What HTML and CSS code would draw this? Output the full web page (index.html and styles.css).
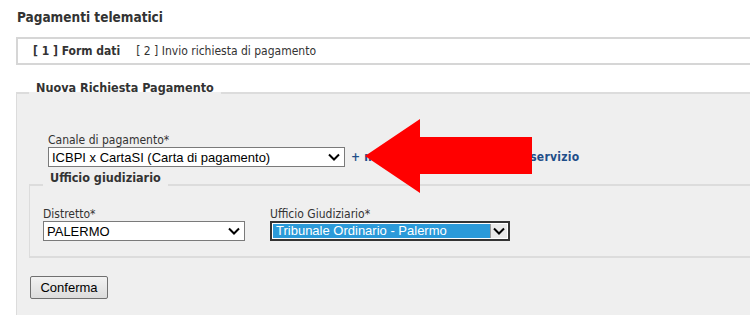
FILE: index.html
```html
<!DOCTYPE html>
<html lang="it">
  <head>
    <meta charset="UTF-8" />
    <meta name="viewport" content="width=device-width, initial-scale=1.0" />
    <title>Pagamenti telematici</title>
    <link rel="stylesheet" href="styles.css">
  </head>
  <body>
    <h1 class="page-title">Pagamenti telematici</h1>

    <div class="steps">
      <span class="step active">[ 1 ] Form dati</span>
      <span class="step">[ 2 ] Invio richiesta di pagamento</span>
    </div>

    <fieldset class="box">
      <legend>Nuova Richiesta Pagamento</legend>

      <div class="field canale">
        <label>Canale di pagamento*</label>
        <div class="field-line">
          <div class="select wide">
            <span class="value">ICBPI x CartaSI (Carta di pagamento)</span>
            <svg class="chevron" viewBox="0 0 12 8" width="12" height="8"><path d="M1 1.5 L6 6.5 L11 1.5" /></svg>
          </div>
          <a class="more" href="#">+ maggiori informazioni sul servizio</a>
        </div>
      </div>

      <fieldset class="box inner">
        <legend>Ufficio giudiziario</legend>
        <div class="field-row">
          <div class="field">
            <label>Distretto*</label>
            <div class="select distretto">
              <span class="value">PALERMO</span>
              <svg class="chevron" viewBox="0 0 12 8" width="12" height="8"><path d="M1 1.5 L6 6.5 L11 1.5" /></svg>
            </div>
          </div>
          <div class="field">
            <label>Ufficio Giudiziario*</label>
            <div class="select focused">
              <span class="value">Tribunale Ordinario - Palermo</span>
              <span class="drop">
                <svg class="chevron" viewBox="0 0 12 8" width="12" height="8"><path d="M1 1.5 L6 6.5 L11 1.5" /></svg>
              </span>
            </div>
          </div>
        </div>
      </fieldset>

      <button class="btn" type="button">Conferma</button>
    </fieldset>

    <!-- freccia rossa sopra il link -->
    <svg class="red-arrow" viewBox="0 0 168 74" width="168" height="74">
      <polygon points="0,37 55,0 55,18 167,18 167,55 55,55 55,74" />
    </svg>
  </body>
</html>
```

FILE: styles.css
```css
html,
body {
  margin: 0;
  padding: 0;
  overflow: hidden;
}

body {
  width: 800px;
  height: 315px;
  background: #fff;
  color: #333;
  font-family: "DejaVu Sans Condensed", "DejaVu Sans", sans-serif;
  font-size: 12px;
  position: relative;
}

.page-title {
  margin: 0;
  padding: 9px 0 0 17px;
  font-size: 13.5px;
  line-height: 17px;
  font-weight: bold;
  color: #333;
}

.steps {
  margin: 11px 0 0 16px;
  height: 24px;
  border: 2px solid #d6d6d6;
  display: flex;
  align-items: center;
  gap: 16px;
  padding-left: 15px;
}

.step.active {
  font-weight: bold;
}

.box {
  margin: 15px 0 0 16px;
  padding: 0 12px 20px 12px;
  border: 1px solid #dcdcdc;
  border-width: 2px 0 0 1px;
  background: #efefef;
}

.box legend {
  margin-left: 0;
  padding: 0 7px 10px;
  font-size: 12.5px;
  font-weight: bold;
  line-height: 16px;
}

.field label {
  display: block;
  line-height: 14px;
}

.canale {
  margin: 27px 0 0 19px;
}

.field-line {
  display: flex;
  align-items: center;
  gap: 6px;
}

.select {
  height: 20px;
  box-sizing: border-box;
  border: 1px solid #7a7a7a;
  background: #fff;
  display: flex;
  align-items: center;
  font-family: "Liberation Sans", Arial, sans-serif;
  font-size: 13px;
  color: #000;
}

.select .value {
  flex: 1;
  padding-left: 3px;
  white-space: nowrap;
}

.chevron {
  fill: none;
  stroke: #000;
  stroke-width: 2;
  margin-right: 4px;
}

.select.wide {
  width: 297px;
}

.select.distretto {
  width: 202px;
}

.more {
  color: #1f4e89;
  font-weight: bold;
  letter-spacing: 0.25px;
  text-decoration: none;
}

.box.inner {
  margin: 3px 0 0;
  padding: 7px 13px 15px;
  border-width: 2px 0 2px 1px;
}

.box.inner legend {
  padding-bottom: 14px;
}

.field-row {
  display: flex;
  gap: 25px;
}

.select.focused {
  width: 240px;
  border: 2px solid #333;
  padding: 1px;
}

.select.focused .value {
  background: #2b9ad9;
  color: #fff;
  height: 100%;
  line-height: 14px;
}

.select.focused .drop {
  width: 16px;
  height: 100%;
  display: flex;
  align-items: center;
  justify-content: center;
  background: #e8e8e8;
  border-left: 1px solid #999;
}

.select.focused .chevron {
  margin: 0;
}

.btn {
  margin-top: 18px;
  margin-left: 1px;
  width: 78px;
  height: 23px;
  border: 1px solid #707070;
  border-radius: 2px;
  background: linear-gradient(#f2f2f2, #dcdcdc);
  font-family: "Liberation Sans", Arial, sans-serif;
  font-size: 13px;
  color: #000;
  padding: 0;
}

.red-arrow {
  position: absolute;
  left: 365px;
  top: 119px;
  fill: #ff0000;
}
```
